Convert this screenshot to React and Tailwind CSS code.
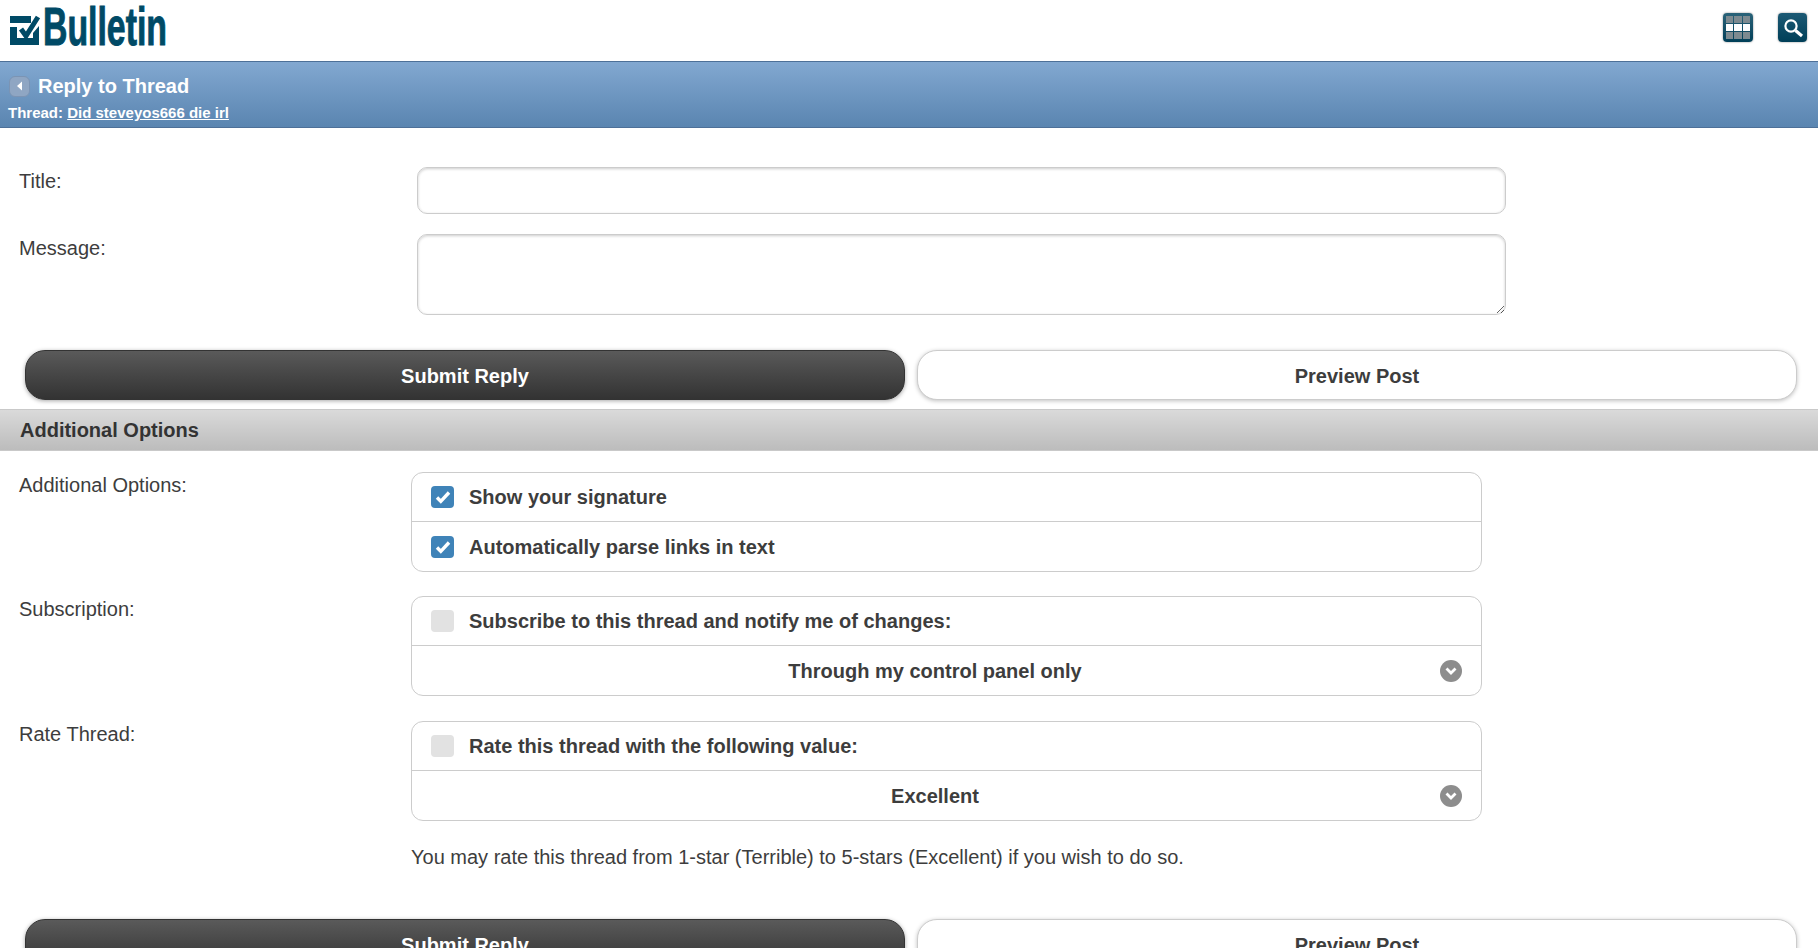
const font = "[font-family:'Liberation_Sans',Arial,sans-serif]";

function Logo() {
  return (
    <svg width="166" height="50" viewBox="0 0 166 50" className="block">
      <path d="M1 16h21v7H1z" fill="#004a66" />
      <path d="M1 27h7v11h16v-5l6-7v19H1z" fill="#004a66" />
      <path d="M12 29l5 7L29 17" fill="none" stroke="#004a66" strokeWidth="5" />
      <text x="34" y="45" fill="#004a66" stroke="#004a66" strokeWidth="1" fontFamily="'Liberation Sans',Arial,sans-serif" fontWeight="700" fontSize="53" textLength="124" lengthAdjust="spacingAndGlyphs">Bulletin</text>
    </svg>
  );
}

function Check({ on }) {
  if (!on) return <span className="w-[23px] h-[22px] rounded-[4px] bg-[#e2e2e2] shrink-0" />;
  return (
    <span className="w-[23px] h-[22px] rounded-[4px] bg-[#3f83b8] shrink-0 flex items-center justify-center">
      <svg width="16" height="14" viewBox="0 0 16 14"><path d="M2 7.5l3.8 3.8L14 2.5" fill="none" stroke="#fff" strokeWidth="3.4" /></svg>
    </span>
  );
}

function CheckRow({ on, label, last }) {
  return (
    <div className={`h-[49px] flex items-center pl-[19px] gap-[15px] font-bold ${last ? "" : "border-b border-[#cccccc]"}`}>
      <Check on={on} />
      <span>{label}</span>
    </div>
  );
}

function SelectRow({ label }) {
  return (
    <div className="h-[49px] relative flex items-center justify-center pr-[23px] font-bold">
      <span>{label}</span>
      <span className="absolute right-[19px] top-[14px] w-[22px] h-[22px] rounded-full bg-[#8d8d8d] flex items-center justify-center">
        <svg width="14" height="10" viewBox="0 0 14 10"><path d="M2.5 2.5L7 7l4.5-4.5" fill="none" stroke="#fff" strokeWidth="2.8" /></svg>
      </span>
    </div>
  );
}

function Row({ label, children, className = "" }) {
  return (
    <div className={`flex ${className}`}>
      <div className="w-[411px] pl-[19px] shrink-0 pt-[2px]">{label}</div>
      <div className="w-[1071px]">{children}</div>
    </div>
  );
}

function Group({ children }) {
  return <div className="border border-[#cccccc] rounded-[12px] bg-white">{children}</div>;
}

function Buttons() {
  return (
    <div className="flex gap-[12px] pl-[25px] pr-[21px]">
      <button className="flex-1 h-[50px] pt-[1px] rounded-[20px] border border-[#333333] bg-gradient-to-b from-[#5a5a5a] to-[#333333] text-white font-bold text-[20px] shadow-[0_1px_4px_rgba(0,0,0,0.35)]">Submit Reply</button>
      <button className="flex-1 h-[50px] pt-[1px] rounded-[20px] border border-[#cccccc] bg-white text-[#3d3d3d] font-bold text-[20px] shadow-[0_1px_4px_rgba(0,0,0,0.25)]">Preview Post</button>
    </div>
  );
}

export default function App() {
  return (
    <div className={`${font} h-[948px] overflow-hidden bg-white text-[#3d3d3d] text-[20px] leading-[22px]`}>
      <header className="h-[61px] flex items-start justify-between pl-[9px] pr-[11px]">
        <Logo />
        <div className="flex gap-[25px] pt-[13px]">
          <span className="w-[30px] h-[29px] rounded-[4px] bg-gradient-to-b from-[#2a6379] to-[#003f58] grid grid-cols-3 gap-[1px] px-[3px] py-[3px] shadow-[0_0_2px_rgba(0,0,0,0.5)]">
            {[0,1,2].map(i => <span key={i} className="bg-[#7d8a90]" />)}
            {[0,1,2].map(i => <span key={i} className="bg-white" />)}
            {[0,1,2].map(i => <span key={i} className="bg-[#7d8a90]" />)}
          </span>
          <span className="w-[29px] h-[29px] rounded-[4px] bg-gradient-to-b from-[#1c5a75] to-[#003f58] flex items-center justify-center shadow-[0_0_2px_rgba(0,0,0,0.5)]">
            <svg width="24" height="24" viewBox="0 0 24 24"><circle cx="10" cy="10" r="5.6" fill="none" stroke="#fff" strokeWidth="2.2" /><path d="M14.5 14.5L21 20" stroke="#fff" strokeWidth="3.2" /></svg>
          </span>
        </div>
      </header>

      <div className="h-[67px] border-y border-[#4d7098] bg-gradient-to-b from-[#82a8d1] to-[#5a85b0] text-white pl-[9px] font-bold">
        <div className="flex items-center gap-[8px] pt-[12px]">
          <span className="w-[21px] h-[21px] rounded-[6px] bg-[#8fa6c3] border border-[#7b94b4] flex items-center justify-center">
            <svg width="8" height="10" viewBox="0 0 8 10"><path d="M6 0.5v9L1 5z" fill="#fff" /></svg>
          </span>
          <span className="text-[20px] leading-[24px]">Reply to Thread</span>
        </div>
        <div className="text-[15px] leading-[16px] mt-[7px] -ml-[1px]">Thread: <a className="underline">Did steveyos666 die irl</a></div>
      </div>

      <div className="flex flex-col pt-[39px]">
        <div className="flex h-[47px]">
          <div className="w-[417px] pl-[19px] shrink-0 pt-[3px]">Title:</div>
          <input className="w-[1089px] h-[47px] rounded-[10px] border border-[#cccccc] shadow-[inset_0_1px_3px_rgba(0,0,0,0.2)] bg-white" />
        </div>
        <div className="flex mt-[20px]">
          <div className="w-[417px] pl-[19px] shrink-0 pt-[3px]">Message:</div>
          <textarea className="block w-[1089px] h-[81px] rounded-[10px] border border-[#cccccc] shadow-[inset_0_1px_3px_rgba(0,0,0,0.2)] bg-white" />
        </div>
        <div className="mt-[35px]"><Buttons /></div>
      </div>

      <div className="mt-[9px] h-[42px] border-y border-[#c9c9c9] bg-gradient-to-b from-[#dadada] to-[#bcbcbc] pl-[20px] flex items-center font-bold text-[#333333] text-[20px]">Additional Options</div>

      <div className="pt-[21px]">
        <Row label="Additional Options:">
          <Group>
            <CheckRow on label="Show your signature" />
            <CheckRow on label="Automatically parse links in text" last />
          </Group>
        </Row>
        <Row label="Subscription:" className="mt-[24px]">
          <Group>
            <CheckRow label="Subscribe to this thread and notify me of changes:" />
            <SelectRow label="Through my control panel only" />
          </Group>
        </Row>
        <Row label="Rate Thread:" className="mt-[25px]">
          <Group>
            <CheckRow label="Rate this thread with the following value:" />
            <SelectRow label="Excellent" />
          </Group>
        </Row>
        <div className="pl-[411px] mt-[25px]">You may rate this thread from 1-star (Terrible) to 5-stars (Excellent) if you wish to do so.</div>
        <div className="mt-[51px]"><Buttons /></div>
      </div>
    </div>
  );
}
